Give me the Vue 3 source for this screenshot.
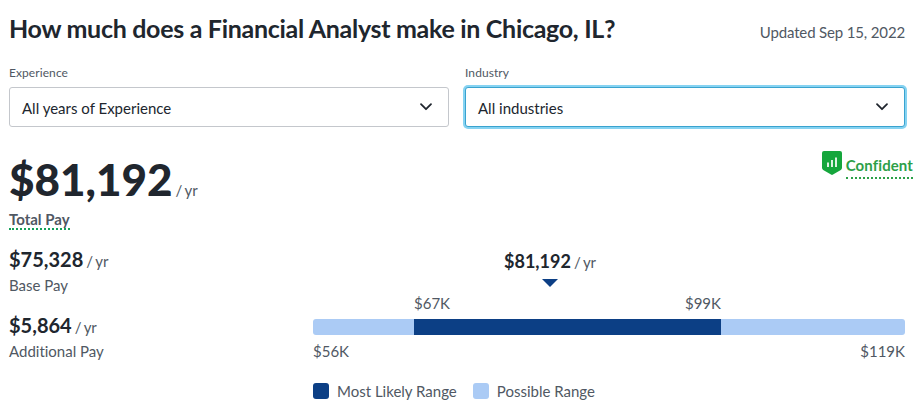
<script setup>
const filters = [
  { label: 'Experience', value: 'All years of Experience', focused: false },
  { label: 'Industry', value: 'All industries', focused: true },
]
const parts = [
  { amount: '$75,328', label: 'Base Pay' },
  { amount: '$5,864', label: 'Additional Pay' },
]
const legend = [
  { label: 'Most Likely Range', kind: 'likely' },
  { label: 'Possible Range', kind: 'possible' },
]
// Widths of the segments below and within the likely range, in percent.
const range = { before: 17.06, likely: 51.86 }
</script>

<template>
  <main class="page">
    <header class="head">
      <h1>How much does a Financial Analyst make in Chicago, IL?</h1>
      <span class="updated">Updated Sep 15, 2022</span>
    </header>

    <section class="filters">
      <div v-for="f in filters" :key="f.label" class="field">
        <span class="label">{{ f.label }}</span>
        <button type="button" class="select" :class="{ focused: f.focused }">
          <span>{{ f.value }}</span>
          <svg width="14" height="10" viewBox="0 0 14 10" aria-hidden="true">
            <path d="M2 2.2 L7 7.2 L12 2.2" fill="none" stroke="#20262e" stroke-width="1.8" stroke-linecap="round" stroke-linejoin="round" />
          </svg>
        </button>
      </div>
    </section>

    <section class="summary">
      <div>
        <div class="total"><strong>$81,192</strong><span class="per">/ yr</span></div>
        <span class="total-label">Total Pay</span>
      </div>
      <div class="confidence">
        <svg width="20" height="24" viewBox="0 0 20 24" aria-hidden="true">
          <path d="M2 0 H18 Q20 0 20 2 V16.8 Q20 18.2 18.8 19 L11 23.6 Q10 24.2 9 23.6 L1.2 19 Q0 18.2 0 16.8 V2 Q0 0 2 0 Z" fill="#15a63c" />
          <path d="M6 11.5 V16 M10 9 V16 M14 6.5 V16" stroke="#fff" stroke-width="1.7" fill="none" />
        </svg>
        <span class="confident">Confident</span>
      </div>
    </section>

    <section class="details">
      <div class="parts">
        <div v-for="p in parts" :key="p.label" class="part">
          <div class="amount"><strong>{{ p.amount }}</strong><span class="per">/ yr</span></div>
          <div class="text">{{ p.label }}</div>
        </div>
      </div>

      <div class="chart">
        <div class="marker">
          <div class="amount"><strong>$81,192</strong><span class="per">/ yr</span></div>
          <svg width="16" height="8" viewBox="0 0 16 8" aria-hidden="true"><path d="M0 0 H16 L8 8 Z" fill="#0c3f85" /></svg>
        </div>
        <div class="bounds inner">
          <span :style="{ width: range.before + '%' }"></span>
          <div class="ends" :style="{ width: range.likely + '%' }"><span>$67K</span><span>$99K</span></div>
        </div>
        <div class="bar">
          <span :style="{ width: range.before + '%' }"></span>
          <span class="likely" :style="{ width: range.likely + '%' }"></span>
        </div>
        <div class="bounds ends outer"><span>$56K</span><span>$119K</span></div>
        <div class="legend">
          <div v-for="l in legend" :key="l.kind" class="key">
            <i :class="l.kind"></i><span>{{ l.label }}</span>
          </div>
        </div>
      </div>
    </section>
  </main>
</template>

<style>
body {
  background: #fff;
}
</style>

<style scoped>
.page {
  box-sizing: border-box;
  width: 924px;
  height: 417px;
  padding: 10px 19px 0 9px;
  overflow: hidden;
  font: 400 15px/24px Lato, "Liberation Sans", sans-serif;
  font-variant-ligatures: none;
  color: #505863;
}
.head {
  display: flex;
  justify-content: space-between;
  align-items: baseline;
  height: 36px;
}
h1 {
  margin: 0;
  font-size: 25px;
  line-height: 36px;
  font-weight: 700;
  letter-spacing: -0.3px;
  color: #20262e;
  white-space: nowrap;
}
.updated {
  letter-spacing: -0.15px;
}
strong {
  color: #20262e;
  font-weight: 700;
}
.filters {
  display: grid;
  grid-template-columns: 1fr 1fr;
  gap: 16px;
  margin-top: 19px;
}
.field {
  display: flex;
  flex-direction: column;
}
.label {
  font-size: 12px;
  line-height: 16px;
  letter-spacing: 0.08px;
  margin-bottom: 6px;
}
.select {
  box-sizing: border-box;
  display: flex;
  align-items: center;
  justify-content: space-between;
  height: 40px;
  padding: 2px 15px 0 12px;
  border: 1px solid #c4c7cc;
  border-radius: 3px;
  background: #fff;
  font: inherit;
  color: #20262e;
}
.select svg {
  margin-bottom: 2px;
}
.select.focused {
  border-color: #3aa3cf;
  box-shadow: 0 0 0 2px #86d3f2;
}
.summary {
  display: flex;
  justify-content: space-between;
  height: 119px;
}
.total {
  display: flex;
  align-items: baseline;
  gap: 3px;
  margin-top: 24px;
  height: 58px;
  line-height: 56px;
}
.per {
  word-spacing: -1px;
  letter-spacing: -0.1px;
}
.total strong {
  font-size: 44px;
  font-weight: 900;
}
.total-label {
  display: block;
  width: max-content;
  height: 19px;
  line-height: 20px;
  font-weight: 700;
  border-bottom: 2px dotted #15a05a;
}
.confidence {
  display: flex;
  align-items: flex-start;
  gap: 4px;
  margin: 24px -8px 0 0;
}
.confident {
  height: 20px;
  margin-top: 6px;
  line-height: 16px;
  font-weight: 700;
  letter-spacing: 0.1px;
  color: #2ca048;
  border-bottom: 2px dotted #2ca048;
}
.details {
  display: flex;
  justify-content: space-between;
}
.part {
  height: 66px;
}
.amount {
  display: flex;
  align-items: baseline;
  gap: 3px;
  height: 28px;
  line-height: 26px;
}
.part strong {
  font-size: 20px;
}
.marker strong {
  font-size: 18px;
}
.text {
  line-height: 22px;
}
.chart {
  width: 592px;
}
.marker {
  display: flex;
  flex-direction: column;
  align-items: center;
  width: 474px;
  margin-top: 2px;
}
.marker svg {
  margin-top: 3px;
}
.bounds {
  display: flex;
}
.ends {
  display: flex;
  justify-content: space-between;
}
.inner {
  margin-top: 4px;
  height: 28px;
}
.outer {
  margin-top: 4px;
}
.bar {
  display: flex;
  height: 16px;
  border-radius: 3px;
  overflow: hidden;
  background: #abcbf5;
}
.likely {
  background: #0c3f85;
}
.possible {
  background: #abcbf5;
}
.legend {
  display: flex;
  gap: 16px;
  margin-top: 16px;
}
.key {
  display: flex;
  align-items: center;
  gap: 8px;
}
.key i {
  width: 16px;
  height: 16px;
  border-radius: 3px;
}
</style>
